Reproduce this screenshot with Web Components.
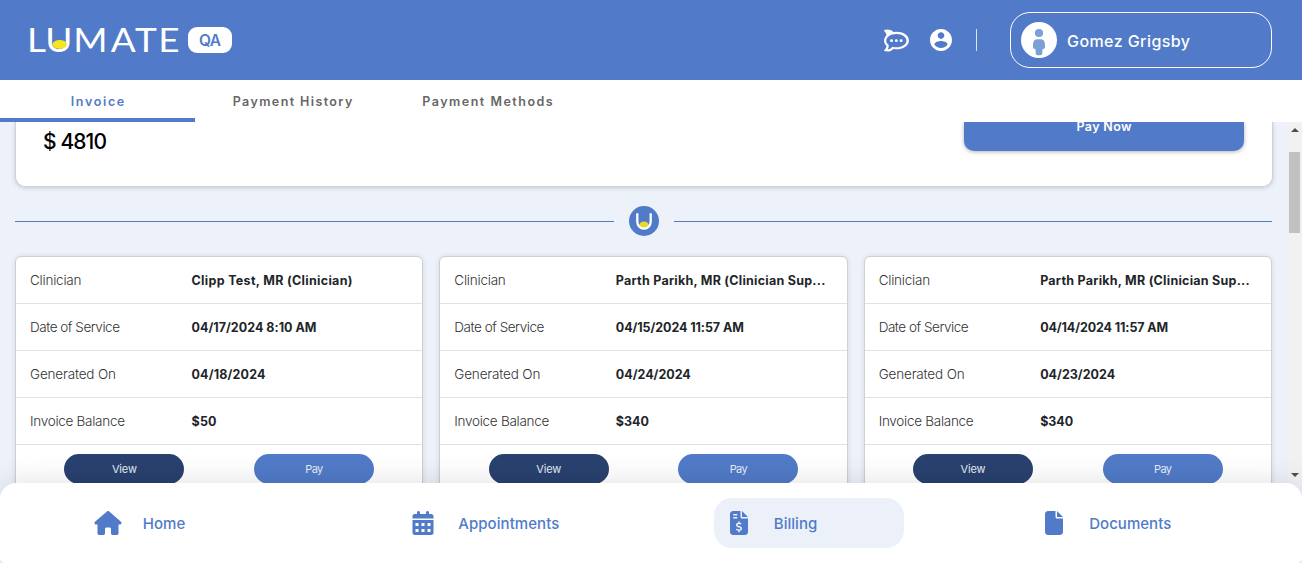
<!DOCTYPE html>
<html lang="en">
<head>
<meta charset="utf-8">
<title>Lumate - Billing</title>
<style>
html,body{margin:0;height:100%;overflow:hidden}
body{font-family:Inter,"Liberation Sans",sans-serif;--blue:#517bc8;--navy:#29416f;--page:#ecf1fa;background:#ecf1fa}
</style>
</head>
<body>
<lm-app></lm-app>
<script>
const define = (name, html, setup) => customElements.define(name, class extends HTMLElement {
  connectedCallback() {
    if (this.shadowRoot) return;
    const t = document.createElement('template');
    t.innerHTML = typeof html === 'function' ? html(this) : html;
    this.attachShadow({mode: 'open'}).append(t.content.cloneNode(true));
    if (setup) setup(this);
  }
});

/* Text set to a fixed measure: tracking is spread evenly over the characters. */
define('lm-text', '<style>:host{display:inline-block;white-space:nowrap}span{display:inline-block}</style><span><slot></slot></span>', el => {
  const w = +el.getAttribute('w'), span = el.shadowRoot.querySelector('span');
  span.style.letterSpacing = (w - span.getBoundingClientRect().width) / (el.textContent.length - 1) + 'px';
  el.style.width = w + 'px';
});

const icons = {
  chat: ['0 0 576 512', '<path d="M284.046,224.8a34.114,34.114,0,1,0,34.317,34.113A34.217,34.217,0,0,0,284.046,224.8Zm-110.45,0a34.114,34.114,0,1,0,34.317,34.113A34.217,34.217,0,0,0,173.6,224.8Zm220.923,0a34.114,34.114,0,1,0,34.317,34.113A34.215,34.215,0,0,0,394.519,224.8Zm153.807-55.319c-15.535-24.172-37.31-45.57-64.681-63.618-52.886-34.817-122.374-54-195.666-54a405.975,405.975,0,0,0-72.032,6.357,238.524,238.524,0,0,0-49.51-36.588C99.684-11.7,40.859.711,11.135,11.421A14.291,14.291,0,0,0,5.58,34.782C26.542,56.458,61.222,99.3,52.7,138.252c-33.142,33.9-51.112,74.776-51.112,117.337,0,43.372,17.97,84.248,51.112,118.148,8.526,38.956-26.154,81.816-47.116,103.491a14.284,14.284,0,0,0,5.555,23.34c29.724,10.709,88.549,23.147,155.324-10.2a238.679,238.679,0,0,0,49.51-36.589A405.972,405.972,0,0,0,288,460.14c73.313,0,142.8-19.159,195.667-53.975,27.371-18.049,49.145-39.426,64.679-63.619,17.309-26.923,26.07-55.916,26.07-86.125C574.394,225.4,565.634,196.43,548.326,169.485ZM284.987,409.9a345.65,345.65,0,0,1-89.446-11.5l-20.129,19.393a184.366,184.366,0,0,1-37.138,27.585,145.767,145.767,0,0,1-52.522,14.87c.983-1.771,1.881-3.563,2.842-5.356q30.258-55.68,16.325-100.078c-32.992-25.962-52.778-59.2-52.778-95.4,0-83.1,104.254-150.469,232.846-150.469s232.867,67.373,232.867,150.469C517.854,342.525,413.6,409.9,284.987,409.9Z"/>'],
  user: ['2 2 20 20', '<path d="M12 2C6.48 2 2 6.48 2 12s4.48 10 10 10 10-4.48 10-10S17.52 2 12 2zm0 3c1.66 0 3 1.34 3 3s-1.34 3-3 3-3-1.34-3-3 1.34-3 3-3zm0 14.2c-2.5 0-4.71-1.28-6-3.22.03-1.99 4-3.08 6-3.08 1.99 0 5.97 1.09 6 3.08-1.29 1.94-3.5 3.22-6 3.22z"/>'],
  person: ['0 0 36 36', '<circle cx="18" cy="18" r="18" fill="#fff"/><circle cx="18" cy="11" r="4.1"/><path d="M16 17.3H20C23 17.3 24 20.3 24 23.5V25C24 26.2 23.2 27 22.2 27H21.600L21.200 31.500C21.100 32.600 20.500 33.200 19.500 33.200H16.500C15.500 33.200 14.900 32.600 14.800 31.500L14.400 27H13.800C12.800 27 12 26.200 12 25V23.500C12 20.300 13 17.300 16 17.300Z"/>'],
  home: ['0 0 576 512', '<path d="M575.8 255.500c0 18-15 32.100-32 32.100h-32l.7 160.200c0 2.700-.2 5.400-.5 8.100V472c0 22.100-17.900 40-40 40H392c-22.100 0-40-17.900-40-40V384c0-17.700-14.300-32-32-32H256c-17.700 0-32 14.300-32 32v88c0 22.100-17.900 40-40 40H104c-22.100 0-40-17.900-40-40V287.600H32c-18 0-32-14-32-32.100c0-9 3-17 10-24L266.400 8c7-7 15-8 22-8s15 2 21 7L564.800 231.500c8 7 12 15 11 24z"/>'],
  calendar: ['0 0 448 512', '<path fill-rule="evenodd" d="M128 0c17.700 0 32 14.300 32 32V64H288V32c0-17.700 14.300-32 32-32s32 14.300 32 32V64h48c26.500 0 48 21.500 48 48v48H0V112C0 85.500 21.500 64 48 64H96V32c0-17.700 14.300-32 32-32zM0 192H448V464c0 26.500-21.500 48-48 48H48c-26.500 0-48-21.500-48-48V192zM64 256v64h64v-64zM192 256v64h64v-64zM320 256v64h64v-64zM64 384v64h64v-64zM192 384v64h64v-64zM320 384v64h64v-64z"/>'],
  invoice: ['0 0 384 512', '<path d="M64 0C28.7 0 0 28.7 0 64V448c0 35.300 28.700 64 64 64H320c35.300 0 64-28.700 64-64V160H256c-17.700 0-32-14.300-32-32V0H64zM256 0V128H384L256 0zM64 80c0-8.800 7.200-16 16-16h64c8.800 0 16 7.200 16 16s-7.200 16-16 16H80c-8.800 0-16-7.200-16-16zm0 64c0-8.800 7.200-16 16-16h64c8.800 0 16 7.200 16 16s-7.200 16-16 16H80c-8.800 0-16-7.200-16-16zm128 72c8.800 0 16 7.200 16 16v17.300c8.500 1.200 16.700 3.100 24.100 5.100c8.500 2.300 13.600 11 11.300 19.600s-11 13.600-19.600 11.300c-11.100-3-22-5.200-32.100-5.300c-8.400-.1-17.400 1.800-23.600 5.500c-5.700 3.400-8.100 7.300-8.100 12.800c0 3.700 1.300 6.500 7.300 10.100c6.900 4.100 16.600 7.100 29.200 10.900l.5 .1c11.300 3.400 25.300 7.600 36.300 14.600c12.100 7.600 22.400 19.700 22.700 38.200c.3 19.300-9.600 33.300-22.900 41.600c-7.700 4.800-16.400 7.600-25.100 9.100V440c0 8.800-7.200 16-16 16s-16-7.200-16-16V422.200c-11.200-2.100-21.700-5.700-30.900-8.900c-2.100-.7-4.200-1.400-6.200-2.100c-8.400-2.800-12.900-11.900-10.100-20.200s11.900-12.900 20.200-10.100c2.500 .8 4.800 1.600 7.100 2.400c13.600 4.600 24.600 8.400 36.300 8.700c9.100 .3 17.900-1.700 23.700-5.300c5.100-3.200 7.900-7.300 7.800-14c-.1-4.600-1.800-7.800-7.700-11.600c-6.800-4.300-16.500-7.400-29-11.200l-1.600-.5c-11-3.300-24.300-7.300-34.800-13.700c-12-7.200-22.600-18.900-22.700-37.300c-.1-19.400 10.800-32.800 23.800-40.500c7.500-4.400 15.800-7.200 24.100-8.700V232c0-8.800 7.200-16 16-16z"/>'],
  file: ['0 0 384 512', '<path d="M0 64C0 28.700 28.700 0 64 0H224V128c0 17.700 14.300 32 32 32H384V448c0 35.300-28.700 64-64 64H64c-35.300 0-64-28.700-64-64V64zm384 64H256V0L384 128z"/>'],
  mark: ['0 0 30 30', '<circle cx="15" cy="15" r="15"/><ellipse cx="15" cy="19.300" rx="5" ry="3.700" fill="#e6da2b"/><path d="M8.300 7.200V16a6.700 6.700 0 0 0 13.400 0V7.200" fill="none" stroke="#fff" stroke-width="2.300"/>']
};
define('lm-icon', el => {
  const [box, body] = icons[el.getAttribute('name')];
  return `<style>:host{display:block;flex:none}svg{display:block;width:100%;height:100%;fill:currentColor}</style><svg viewBox="${box}">${body}</svg>`;
});

define('lm-header', `<style>
:host{display:flex;align-items:center;flex:none;height:80px;box-sizing:border-box;background:var(--blue);color:#fff;padding:0 30px 0 28px}
.logo{display:block;width:152px;height:30px;margin-right:8px;fill:#fff;font-family:Lato,sans-serif;font-size:33px;overflow:visible}
.qa{display:flex;align-items:center;justify-content:center;width:44px;height:26px;border-radius:9px;background:#fff;color:var(--blue);font-size:15.500px;font-weight:600}
.chat{width:25px;height:23px;margin-left:auto}.user{width:22px;height:22px;margin:0 24px 0 21px}
i{width:1px;height:22px;background:#dbe4f4;margin-right:33px}
.who{display:flex;align-items:center;gap:10px;box-sizing:border-box;width:262px;height:56px;border:1px solid #fff;border-radius:20px;padding-left:10px;font-size:16px;font-weight:500}
.face{width:36px;height:36px;color:#7b9fd7}
lm-text{padding-top:2px}.qa lm-text{padding:0}
</style>
<svg class="logo" viewBox="0 0 152 30"><text y="27" x="-1 15.400 40.500 73.900 95.500 116.300" transform="scale(1.12 1)">LUMATE</text><ellipse cx="31.700" cy="19.400" rx="7.200" ry="4.500" fill="#f6e522"/></svg>
<div class="qa"><lm-text w="22">QA</lm-text></div>
<lm-icon class="chat" name="chat"></lm-icon><lm-icon class="user" name="user"></lm-icon><i></i>
<div class="who"><lm-icon class="face" name="person"></lm-icon><lm-text w="123">Gomez Grigsby</lm-text></div>`);

define('lm-tabs', `<style>
:host{display:flex;flex:none;height:42px;background:#fff;font-size:12.500px;font-weight:600;color:#666}
div{width:195px;height:42px;box-sizing:border-box;display:flex;align-items:center;justify-content:center;border-bottom:4px solid transparent;padding-top:4px}
.on{color:var(--blue);border-color:var(--blue)}
</style><div class="on"><lm-text w="53.500">Invoice</lm-text></div><div><lm-text w="119.500">Payment History</lm-text></div><div><lm-text w="130.500">Payment Methods</lm-text></div>`);

define('lm-balance', `<style>
:host{display:flex;justify-content:space-between;box-sizing:border-box;height:65px;margin-right:-1px;background:#fff;border:1px solid #ced3da;border-top:0;border-radius:0 0 10px 10px;box-shadow:0 1px 4px rgba(0,0,0,.16);padding:0 28px 0 27px}
b{font-size:21px;font-weight:500;line-height:26px;padding-top:7px;color:#000}
.btn{width:280px;height:29px;background:var(--blue);color:#fff;border-radius:0 0 10px 10px;font-size:12.500px;font-weight:600;box-shadow:0 1px 4px rgba(0,0,0,.3);display:flex;justify-content:center;align-items:flex-start;line-height:16px}
.btn lm-text{margin-top:-3px}
</style><b><lm-text w="64">$ 4810</lm-text></b><div class="btn"><lm-text w="55">Pay Now</lm-text></div>`);

define('lm-divider', `<style>
:host{display:flex;align-items:center;gap:15px;height:30px;margin:19px 0 20px;color:var(--blue)}
i{flex:1;height:1px;background:var(--blue);margin-top:1px}lm-icon{width:30px;height:30px}
</style><i></i><lm-icon name="mark"></lm-icon><i></i>`);

define('lm-row', `<style>
:host{display:grid;grid-template-columns:161.500px 1fr;align-items:center;height:46px;padding:0 14px;border-bottom:1px solid #dfe1e4;font-size:13.500px;color:#333}
::slotted([slot=label]){font-weight:300}
b{font-size:12.500px;font-weight:700;color:#212529}
</style><slot name="label"></slot><b><slot></slot></b>`);

define('lm-invoice', el => {
  const values = JSON.parse(el.getAttribute('values'));
  const labels = [['Clinician', 51.5], ['Date of Service', 90], ['Generated On', 86], ['Invoice Balance', 95]];
  return `<style>
:host{display:block;box-sizing:border-box;height:420px;background:#fff;border:1px solid #cdd0d4;border-radius:6px;box-shadow:0 0 5px rgba(0,0,0,.1)}
.acts{display:grid;grid-template-columns:1fr 1fr;justify-items:center;padding:9px 13.500px}
.acts div{width:120px;height:30px;border-radius:15px;background:var(--blue);color:#e6ebf5;font-size:11px;line-height:30px;text-align:center}
.acts .view{background:var(--navy)}
</style>${labels.map(([l, w], i) => `<lm-row><lm-text slot="label" w="${w}">${l}</lm-text><lm-text w="${values[i][1]}">${values[i][0]}</lm-text></lm-row>`).join('')}
<div class="acts"><div class="view"><lm-text w="25">View</lm-text></div><div><lm-text w="18">Pay</lm-text></div></div>`;
});

define('lm-scrollbar', `<style>
:host{display:flex;flex-direction:column;align-items:center;justify-content:space-between;box-sizing:border-box;width:15px;background:#f1f1f1;padding:6px 0 6px}
i{width:11px;height:81px;background:#c1c1c1;margin:20px 0 auto}svg{display:block;width:8px;height:4px;fill:#4d4d4d}
</style><svg viewBox="0 0 8 4"><path d="M4 0l4 4H0z"/></svg><i></i><svg viewBox="0 0 8 4"><path d="M0 0h8L4 4z"/></svg>`);

define('lm-nav-item', `<style>
:host{display:flex;align-items:center;box-sizing:border-box;width:190px;height:50px;border-radius:18px;padding-left:11px;color:var(--blue);font-size:15px;font-weight:500}
:host([active]){background:#ecf1f9}
slot[name=icon]::slotted(lm-icon){width:28px;height:24px;margin-right:21px}
</style><slot name="icon"></slot><slot></slot>`);

define('lm-nav', `<style>
:host{display:grid;grid-template-columns:repeat(4,1fr);justify-items:center;align-items:center;box-sizing:border-box;height:80px;padding:0 20px;background:#fff;border-radius:16px 16px 5px 5px;flex:none;position:relative;box-shadow:0 0 30px rgba(0,0,0,.13)}
</style>
<lm-nav-item><lm-icon slot="icon" name="home"></lm-icon><lm-text w="42.500">Home</lm-text></lm-nav-item>
<lm-nav-item><lm-icon slot="icon" name="calendar"></lm-icon><lm-text w="101">Appointments</lm-text></lm-nav-item>
<lm-nav-item active><lm-icon slot="icon" name="invoice"></lm-icon><lm-text w="43.500">Billing</lm-text></lm-nav-item>
<lm-nav-item><lm-icon slot="icon" name="file"></lm-icon><lm-text w="82">Documents</lm-text></lm-nav-item>`);

define('lm-app', `<style>
:host{display:flex;flex-direction:column;width:100%;height:100vh;overflow:hidden;background:var(--page)}
lm-header,lm-tabs{position:relative;z-index:1}
main{display:flex;flex:1;min-height:0;justify-content:space-between}
section{flex:1;min-width:0;overflow:hidden;padding:0 15px}
.cards{display:grid;grid-template-columns:repeat(3,1fr);gap:16px}
</style>
<lm-header></lm-header><lm-tabs></lm-tabs>
<main><section><lm-balance></lm-balance><lm-divider></lm-divider><div class="cards">
<lm-invoice values='[["Clipp Test, MR (Clinician)",161],["04/17/2024 8:10 AM",125],["04/18/2024",74],["$50",25]]'></lm-invoice>
<lm-invoice values='[["Parth Parikh, MR (Clinician Sup...",209.5],["04/15/2024 11:57 AM",128],["04/24/2024",75],["$340",33]]'></lm-invoice>
<lm-invoice values='[["Parth Parikh, MR (Clinician Sup...",209.5],["04/14/2024 11:57 AM",128],["04/23/2024",75],["$340",33]]'></lm-invoice>
</div></section><lm-scrollbar></lm-scrollbar></main>
<lm-nav></lm-nav>`);
</script>
</body>
</html>
